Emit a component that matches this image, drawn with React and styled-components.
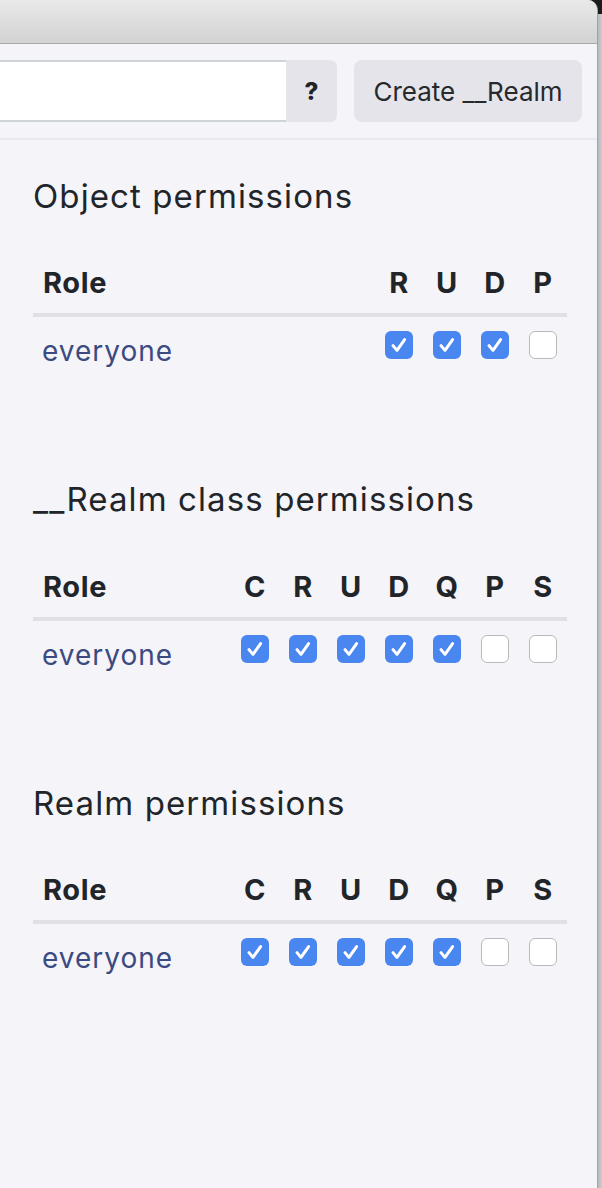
import React from "react";
import styled, { createGlobalStyle } from "styled-components";

const Global = createGlobalStyle`
  html, body { margin: 0; padding: 0; }
  body {
    background: #c3c3c7;
    font-family: Inter, "Noto Sans", sans-serif;
    color: #212529;
  }
`;

const Frame = styled.div`
  display: flex;
  min-height: 1188px;
  background: linear-gradient(to bottom, #1c1c1c 0, #1c1c1c 14px, #c3c3c7 14px);
`;

const Window = styled.div`
  width: 597px;
  flex: none;
  background: #f4f4f9;
  border-right: 1px solid #a3a3a6;
  border-top-right-radius: 10px;
  overflow: hidden;
  display: flex;
  flex-direction: column;
`;

const Strip = styled.div`
  flex: 1;
  margin-top: 14px;
  background: linear-gradient(to right, #b9b9bd, #cdcdd1);
`;

const TitleBar = styled.div`
  height: 43px;
  background: linear-gradient(to bottom, #e9e9e9, #d2d2d2);
  border-bottom: 1px solid #a9a9a9;
`;

const Toolbar = styled.div`
  display: flex;
  align-items: stretch;
  gap: 17px;
  padding: 16px 15px 16px 0;
  border-bottom: 2px solid #e8e8ee;
`;

const InputGroup = styled.div`
  flex: 1;
  display: flex;
  height: 62px;
`;

const Input = styled.input`
  flex: 1;
  min-width: 0;
  box-sizing: border-box;
  height: 62px;
  border: none;
  border-top: 2px solid #cfd4d8;
  border-bottom: 2px solid #cfd4d8;
  background: #ffffff;
  outline: none;
  padding: 0;
`;

const HelpButton = styled.button`
  width: 51px;
  border: none;
  background: #e4e4ea;
  border-radius: 0 7px 7px 0;
  font-family: Inter, sans-serif;
  font-weight: 800;
  font-size: 24px;
  color: #212529;
  padding: 0;
`;

const CreateButton = styled.button`
  width: 228px;
  height: 62px;
  border: none;
  border-radius: 8px;
  background: #e4e4ea;
  font-family: Inter, sans-serif;
  font-size: 26px;
  color: #26292d;
  padding: 0;
`;

const Content = styled.div`
  padding: 36px 30px 0 33px;
  display: flex;
  flex-direction: column;
  gap: 111px;
`;

const Section = styled.section`
  display: flex;
  flex-direction: column;
`;

const Heading = styled.h2`
  margin: 0 0 50.4px 0;
  font-size: 33px;
  line-height: 40px;
  font-weight: 400;
  color: #212529;
  letter-spacing: 1.1px;
`;

const Table = styled.div`
  display: grid;
  grid-template-columns: 1fr repeat(${(p) => p.$cols}, 48px);
`;

const HeadCell = styled.div`
  font-size: 29px;
  line-height: 34px;
  font-weight: 700;
  letter-spacing: 0.6px;
  color: #212529;
  padding: 0 0 13px ${(p) => (p.$role ? "10px" : "0")};
  text-align: ${(p) => (p.$role ? "left" : "center")};
  border-bottom: 4px solid #dfe1e5;
`;

const RoleCell = styled.div`
  padding: 17px 0 0 9px;
  font-size: 28px;
  line-height: 34px;
  letter-spacing: 1px;
  color: #3b4a80;
`;

const BoxCell = styled.div`
  padding-top: 14px;
  display: flex;
  justify-content: center;
`;

const Box = styled.span`
  width: 28px;
  height: 28px;
  box-sizing: border-box;
  border-radius: 6px;
  display: flex;
  align-items: center;
  justify-content: center;
  background: ${(p) => (p.$on ? "#4a86f0" : "#ffffff")};
  border: ${(p) => (p.$on ? "none" : "1px solid #b9b9bc")};
`;

const Check = () => (
  <svg width="28" height="28" viewBox="0 0 28 28">
    <path
      d="M8 14.6 L12 19.4 L19.6 8.6"
      fill="none"
      stroke="#ffffff"
      strokeWidth="3"
      strokeLinecap="round"
      strokeLinejoin="round"
    />
  </svg>
);

const sections = [
  { title: "Object permissions", cols: ["R", "U", "D", "P"], on: [1, 1, 1, 0] },
  {
    title: "__Realm class permissions",
    cols: ["C", "R", "U", "D", "Q", "P", "S"],
    on: [1, 1, 1, 1, 1, 0, 0],
  },
  {
    title: "Realm permissions",
    cols: ["C", "R", "U", "D", "Q", "P", "S"],
    on: [1, 1, 1, 1, 1, 0, 0],
  },
];

export default function App() {
  return (
    <>
      <Global />
      <Frame>
        <Window>
          <TitleBar />
          <Toolbar>
            <InputGroup>
              <Input />
              <HelpButton>?</HelpButton>
            </InputGroup>
            <CreateButton>Create __Realm</CreateButton>
          </Toolbar>
          <Content>
            {sections.map((s) => (
              <Section key={s.title}>
                <Heading>{s.title}</Heading>
                <Table $cols={s.cols.length}>
                  <HeadCell $role>Role</HeadCell>
                  {s.cols.map((c) => (
                    <HeadCell key={c}>{c}</HeadCell>
                  ))}
                  <RoleCell>everyone</RoleCell>
                  {s.on.map((v, i) => (
                    <BoxCell key={i}>
                      <Box $on={!!v}>{v ? <Check /> : null}</Box>
                    </BoxCell>
                  ))}
                </Table>
              </Section>
            ))}
          </Content>
        </Window>
        <Strip />
      </Frame>
    </>
  );
}
